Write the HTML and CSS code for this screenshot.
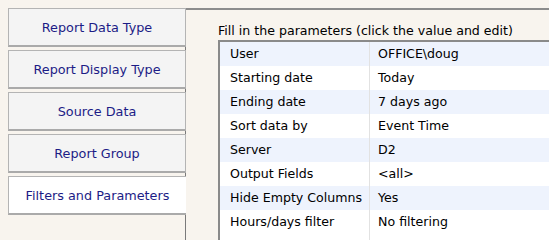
FILE: index.html
```html
<!DOCTYPE html>
<html>
<head>
<meta charset="utf-8">
<link rel="stylesheet" href="styles.css">
</head>
<body>
<div class="wrap">
  <div class="tabs">
    <div class="tab">Report Data Type</div>
    <div class="tab">Report Display Type</div>
    <div class="tab">Source Data</div>
    <div class="tab">Report Group</div>
    <div class="tab active">Filters and Parameters</div>
  </div>
  <div class="panel">
    <div class="caption">Fill in the parameters (click the value and edit)</div>
    <div class="grid">
      <div class="row alt"><div class="key">User</div><div class="val">OFFICE\doug</div></div>
      <div class="row"><div class="key">Starting date</div><div class="val">Today</div></div>
      <div class="row alt"><div class="key">Ending date</div><div class="val">7 days ago</div></div>
      <div class="row"><div class="key">Sort data by</div><div class="val">Event Time</div></div>
      <div class="row alt"><div class="key">Server</div><div class="val">D2</div></div>
      <div class="row"><div class="key">Output Fields</div><div class="val">&lt;all&gt;</div></div>
      <div class="row alt"><div class="key">Hide Empty Columns</div><div class="val">Yes</div></div>
      <div class="row"><div class="key">Hours/days filter</div><div class="val">No filtering</div></div>
      <div class="row"><div class="key"></div><div class="val"></div></div>
    </div>
  </div>
</div>
</body>
</html>
```

FILE: styles.css
```css
html, body {
  margin: 0;
  padding: 0;
  background: #f8f4ee;
  font-family: "DejaVu Sans", Verdana, sans-serif;
  font-size: 12.6px;
  width: 549px;
  height: 240px;
  overflow: hidden;
}
.wrap {
  display: flex;
  height: 240px;
}
.tabs {
  padding: 8px 0 0 8px;
  width: 178px;
  margin-right: -1px;
  position: relative;
  z-index: 1;
  display: flex;
  flex-direction: column;
  gap: 3px;
}
.tab {
  box-sizing: border-box;
  height: 39px;
  padding-top: 1px;
  background: #f4f4f4;
  border: 1px solid #b4b4b4;
  border-bottom: 2px solid #aaaaaa;
  color: #1c1c86;
  display: flex;
  align-items: center;
  justify-content: center;
  font-size: 12.8px;
}
.tab.active {
  background: #ffffff;
  border-right: none;
}
.panel {
  flex: 1;
  margin-top: 8px;
  border-top: 2px solid #8c8c8c;
  border-left: 1px solid #7a7a7a;
  padding-left: 32px;
  overflow: hidden;
}
.caption {
  color: #000;
  margin-top: 13px;
  height: 17px;
  line-height: 15px;
  white-space: nowrap;
}
.grid {
  border-top: 2px solid #8a8a8a;
  border-left: 2px solid #8a8a8a;
  background: #ffffff;
  width: 400px;
}
.row {
  display: flex;
  height: 24px;
  align-items: center;
  background: #ffffff;
}
.row.alt {
  background: #eef3fd;
}
.key {
  box-sizing: border-box;
  width: 150px;
  padding-left: 10px;
  height: 24px;
  line-height: 24px;
  border-right: 1px solid #e2e2e2;
  white-space: nowrap;
}
.val {
  padding-left: 8px;
  line-height: 24px;
  white-space: nowrap;
}
```
